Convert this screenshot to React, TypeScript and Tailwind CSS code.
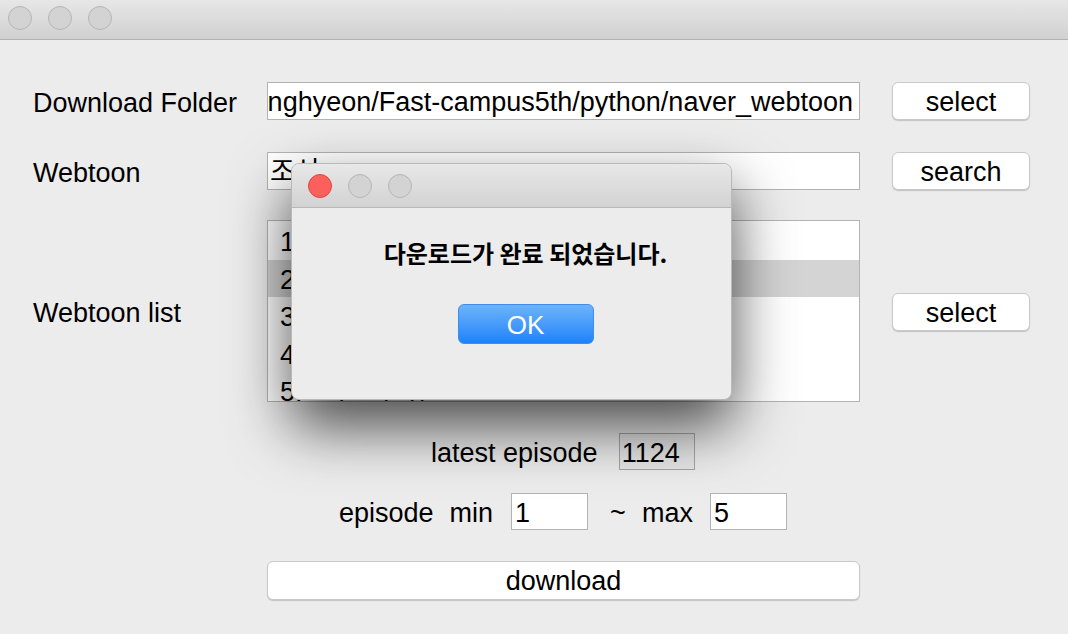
import React from "react";

const FONT = { fontFamily: '"Liberation Sans", Arial, "Noto Sans CJK KR", sans-serif' };

const ITEMS = ["1. 조선왕조실톡", "2. 조선여우스캔들", "3. 조선좀비실록", "4. 조선의 등불", "5. 조선 아이돌"];

function TrafficLights({ active = false }: { active?: boolean }) {
  return (
    <div className="flex items-center gap-[16px]">
      <span
        className={
          active
            ? "h-[24px] w-[24px] rounded-full border border-[#e2463f] bg-[#fc605c]"
            : "h-[24px] w-[24px] rounded-full border border-[#b5b5b5] bg-[#d3d3d3]"
        }
      />
      <span className="h-[24px] w-[24px] rounded-full border border-[#b5b5b5] bg-[#d3d3d3]" />
      <span className="h-[24px] w-[24px] rounded-full border border-[#b5b5b5] bg-[#d3d3d3]" />
    </div>
  );
}

function MacButton({ children, className = "" }: { children: React.ReactNode; className?: string }) {
  return (
    <button
      className={`flex h-[38px] items-center justify-center rounded-[6px] border border-[#c9c9c9] bg-white pt-[2px] text-[27px] leading-none text-black shadow-[0_1px_1px_rgba(0,0,0,0.18)] ${className}`}
    >
      {children}
    </button>
  );
}

function Label({ children }: { children: React.ReactNode }) {
  return <div className="w-[234px] shrink-0 pt-[4px] text-[27px] leading-none text-black">{children}</div>;
}

export default function App() {
  return (
    <div className="relative h-[634px] w-[1068px] overflow-hidden bg-[#ececec]" style={FONT}>
      <div className="flex h-[40px] items-center border-b border-[#b1b1b1] bg-gradient-to-b from-[#e8e7e8] to-[#d1d0d1] pb-[3px] pl-[8px]">
        <TrafficLights />
      </div>

      <div className="flex flex-col pl-[33px] pt-[42px]">
        <div className="flex h-[38px] items-center">
          <Label>Download Folder</Label>
          <div className="flex h-[38px] w-[593px] items-center justify-end overflow-hidden whitespace-nowrap border border-[#b3b3b3] bg-white pr-[6px] pt-[3px] text-[27px] text-black">
            /Users/seonghyeon/Fast-campus5th/python/naver_webtoon
          </div>
          <MacButton className="ml-[32px] w-[138px]">select</MacButton>
        </div>

        <div className="mt-[32px] flex h-[38px] items-center">
          <Label>Webtoon</Label>
          <div className="flex h-[38px] w-[593px] items-center overflow-hidden whitespace-nowrap border border-[#b3b3b3] bg-white pl-[2px] pt-[3px] text-[27px] text-black">
            조선
          </div>
          <MacButton className="ml-[32px] w-[138px]">search</MacButton>
        </div>

        <div className="mt-[30px] flex items-center">
          <Label>Webtoon list</Label>
          <div className="h-[182px] w-[593px] overflow-hidden border border-[#b3b3b3] bg-white pt-[1px]">
            {ITEMS.map((item, i) => (
              <div
                key={item}
                className={`flex h-[37.5px] items-center pl-[12px] pt-[3px] text-[27px] text-black ${i === 1 ? "bg-[#d4d4d4]" : ""}`}
              >
                {item}
              </div>
            ))}
          </div>
          <MacButton className="ml-[32px] mt-[2px] w-[138px]">select</MacButton>
        </div>

        <div className="mt-[31px] flex h-[37px] items-center pl-[398px] text-[27px] text-black">
          <span className="pt-[3px]">latest episode</span>
          <div className="ml-[21px] flex h-[37px] w-[76px] items-center border border-[#a5a5a5] bg-[#e6e6e6] pl-[2px] pt-[3px]">
            1124
          </div>
        </div>

        <div className="mt-[23px] flex h-[37px] items-center pl-[306px] text-[27px] text-black">
          <span className="pt-[3px]">episode</span>
          <span className="ml-[16px] pt-[3px]">min</span>
          <div className="ml-[18px] flex h-[37px] w-[77px] items-center border border-[#b3b3b3] bg-white pl-[3px] pt-[3px]">1</div>
          <span className="ml-[22px] pt-[3px]">~</span>
          <span className="ml-[16px] pt-[3px]">max</span>
          <div className="ml-[17px] flex h-[37px] w-[77px] items-center border border-[#b3b3b3] bg-white pl-[3px] pt-[3px]">5</div>
        </div>

        <div className="mt-[31px] pl-[234px]">
          <MacButton className="h-[39px] w-[593px]">download</MacButton>
        </div>
      </div>

      <div className="absolute left-[291px] top-[163px] flex h-[237px] w-[441px] flex-col overflow-hidden rounded-[8px] border border-[#b9b9b9] bg-[#ececec] shadow-[0_26px_60px_rgba(0,0,0,0.7)]">
        <div className="flex h-[44px] shrink-0 items-center border-b border-[#b7b7b7] bg-gradient-to-b from-[#e9e8e9] to-[#d3d2d3] pl-[16px]">
          <TrafficLights active />
        </div>
        <div className="flex flex-1 flex-col items-center pl-[28px] pt-[33px]">
          <div
            className="text-[24px] font-bold leading-none text-black"
            style={{ fontFamily: '"Noto Sans CJK KR", sans-serif' }}
          >
            다운로드가 완료 되었습니다.
          </div>
          <button className="mt-[39px] flex h-[40px] w-[136px] items-center justify-center rounded-[6px] border border-[#3d8ef0] bg-gradient-to-b from-[#6cb3fa] to-[#1a82fb] pt-[2px] text-[26px] leading-none text-white">
            OK
          </button>
        </div>
      </div>
    </div>
  );
}
